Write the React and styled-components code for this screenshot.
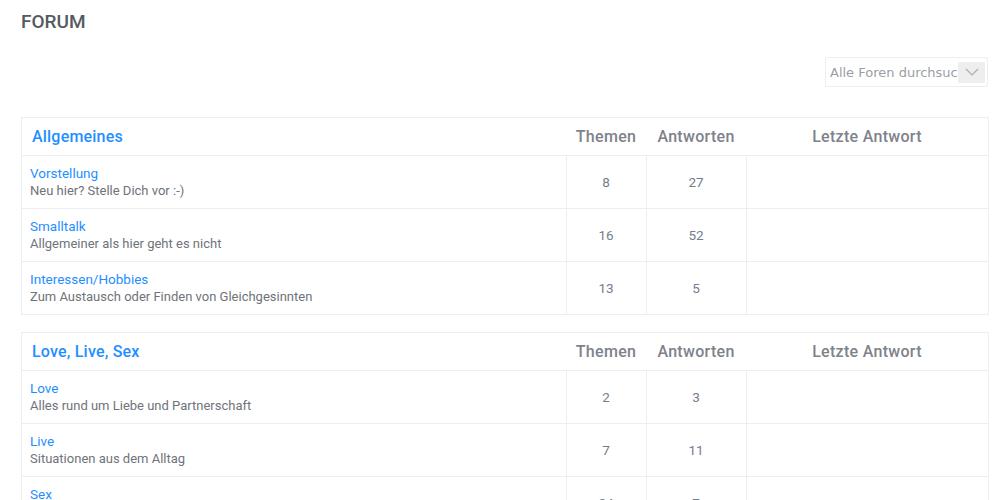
import React from 'react';
import styled, { createGlobalStyle } from 'styled-components';

const GlobalStyle = createGlobalStyle`
  body {
    margin: 0;
    background: #fff;
    font-family: Roboto, "Liberation Sans", sans-serif;
  }
`;

const categories = [
  {
    title: 'Allgemeines',
    forums: [
      { name: 'Vorstellung', desc: 'Neu hier? Stelle Dich vor :-)', topics: 8, replies: 27 },
      { name: 'Smalltalk', desc: 'Allgemeiner als hier geht es nicht', topics: 16, replies: 52 },
      { name: 'Interessen/Hobbies', desc: 'Zum Austausch oder Finden von Gleichgesinnten', topics: 13, replies: 5 },
    ],
  },
  {
    title: 'Love, Live, Sex',
    forums: [
      { name: 'Love', desc: 'Alles rund um Liebe und Partnerschaft', topics: 2, replies: 3 },
      { name: 'Live', desc: 'Situationen aus dem Alltag', topics: 7, replies: 11 },
      { name: 'Sex', desc: 'Alles rund um das Thema Sex', topics: 24, replies: 7 },
    ],
  },
];

const App = () => {
  return (
    <>
      <GlobalStyle />
      <StyledPage>
        <StyledTitle>FORUM</StyledTitle>
        <StyledToolbar>
          <StyledSearch>
            <span>Alle Foren durchsuchen</span>
            <StyledArrow>
              <svg width="14" height="8" viewBox="0 0 14 8" fill="none">
                <path d="M1 1l6 6 6-6" stroke="#a9adb5" strokeWidth="1.2" />
              </svg>
            </StyledArrow>
          </StyledSearch>
        </StyledToolbar>
        {categories.map((cat) => (
          <StyledTable key={cat.title}>
            <thead>
              <tr>
                <StyledCatHead>{cat.title}</StyledCatHead>
                <StyledColHead $w={80}>Themen</StyledColHead>
                <StyledColHead $w={100}>Antworten</StyledColHead>
                <StyledColHead $w={242}>Letzte Antwort</StyledColHead>
              </tr>
            </thead>
            <tbody>
              {cat.forums.map((f) => (
                <tr key={f.name}>
                  <StyledNameCell>
                    <StyledForumName>{f.name}</StyledForumName>
                    <StyledDesc>{f.desc}</StyledDesc>
                  </StyledNameCell>
                  <StyledNumCell>{f.topics}</StyledNumCell>
                  <StyledNumCell>{f.replies}</StyledNumCell>
                  <StyledNumCell />
                </tr>
              ))}
            </tbody>
          </StyledTable>
        ))}
      </StyledPage>
    </>
  );
};

export default App;

const StyledPage = styled.div`
  padding: 10px 12px 0 21px;
`;

const StyledTitle = styled.h1`
  margin: 0;
  font-size: 19px;
  font-weight: 500;
  color: #555a62;
  line-height: 24px;
`;

const StyledToolbar = styled.div`
  display: flex;
  justify-content: flex-end;
  margin-top: 23px;
  margin-bottom: 30px;
`;

const StyledSearch = styled.div`
  width: 163px;
  height: 30px;
  border: 1px solid #eceef0;
  border-radius: 2px;
  display: flex;
  align-items: center;
  padding-left: 4px;
  box-sizing: border-box;
  overflow: hidden;
  font-family: "DejaVu Sans", Verdana, sans-serif;
  font-size: 13px;
  color: #9a9ea6;
  white-space: nowrap;

  span {
    flex: 1;
    overflow: hidden;
  }
`;

const StyledArrow = styled.div`
  width: 27px;
  height: 21px;
  margin-right: 2px;
  background: #eeeeef;
  display: flex;
  align-items: center;
  justify-content: center;
  flex-shrink: 0;
`;

const StyledTable = styled.table`
  width: 968px;
  border-collapse: collapse;
  border: 1px solid #eceef1;
  margin-bottom: 17px;
  table-layout: fixed;
`;

const StyledCatHead = styled.th`
  height: 37px;
  padding: 0 10px;
  text-align: left;
  font-size: 16px;
  font-weight: 500;
  letter-spacing: 0.2px;
  color: #1f8fff;
  border-bottom: 1px solid #eceef1;
`;

const StyledColHead = styled.th`
  width: ${(p) => p.$w}px;
  height: 37px;
  padding: 0;
  font-size: 16px;
  font-weight: 500;
  letter-spacing: 0.3px;
  color: #7e828b;
  text-align: center;
  border-bottom: 1px solid #eceef1;
`;

const StyledNameCell = styled.td`
  height: 52px;
  padding: 0 8px;
  border-bottom: 1px solid #eceef1;
  vertical-align: middle;
`;

const StyledForumName = styled.div`
  font-size: 13.5px;
  font-weight: 400;
  color: #1f8fff;
  line-height: 18px;
`;

const StyledDesc = styled.div`
  font-size: 13px;
  color: #6f737b;
  line-height: 18px;
`;

const StyledNumCell = styled.td`
  height: 52px;
  padding: 0;
  text-align: center;
  font-size: 13.5px;
  color: #747d8f;
  border-left: 1px solid #eceef1;
  border-bottom: 1px solid #eceef1;
`;
